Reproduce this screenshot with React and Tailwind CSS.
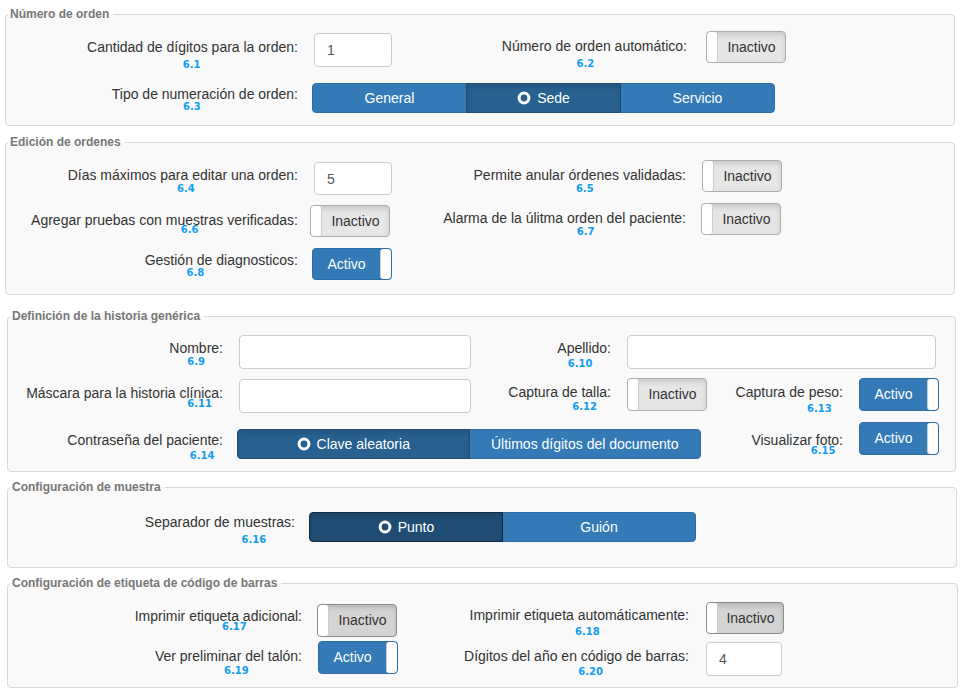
// App.jsx
import React from 'react';

const NUM = "font-['DejaVu_Sans',sans-serif] font-bold text-[10px] leading-[12px] text-[#139cf0] whitespace-nowrap";

function Section({ title, outer, children }) {
  return (
    <fieldset className={`min-w-0 rounded-[4px] border border-[#d9d9d9] bg-[#f9f9f9] px-0 ${outer}`}>
      <legend className="ml-[2px] pl-[2px] pr-[4px] text-[12px] leading-[14px] font-bold text-[#777]">
        {title}
      </legend>
      {children}
    </fieldset>
  );
}

function Label({ text, num, col, numCls }) {
  return (
    <div className={`shrink-0 flex justify-end ${col}`}>
      <div className="flex flex-col items-center">
        <span className="text-[14px] leading-[20px] text-[#333] whitespace-nowrap">{text}</span>
        <span className={`${NUM} ${numCls}`}>{num}</span>
      </div>
    </div>
  );
}

function Input({ value, cls }) {
  return (
    <input
      readOnly
      value={value}
      className={`shrink-0 rounded-[4px] border border-[#ccc] bg-white pl-[12px] text-[14px] text-[#555] outline-none ${cls}`}
    />
  );
}

function Toggle({ on, dark, cls }) {
  if (on) {
    return (
      <div className={`shrink-0 flex overflow-hidden rounded-[4px] border border-[#2e6da4] bg-[#337ab7] ${cls}`}>
        <span className="flex-1 flex items-center justify-center text-[14px] text-white">Activo</span>
        <span className="w-[11px] rounded-[3px] border-l border-[#ccc] bg-white" />
      </div>
    );
  }
  return (
    <div
      className={`shrink-0 flex overflow-hidden rounded-[4px] border shadow-[inset_0_3px_5px_rgba(0,0,0,0.125)] ${
        dark ? 'border-[#8c8c8c] bg-[#d4d4d4]' : 'border-[#adadad] bg-[#e6e6e6]'
      } ${cls}`}
    >
      <span className="w-[11px] rounded-[3px] border-r border-[#ccc] bg-white" />
      <span className="flex-1 flex items-center justify-center text-[14px] text-[#333]">Inactivo</span>
    </div>
  );
}

function RadioDot() {
  return (
    <svg width="14" height="14" viewBox="0 0 14 14" className="shrink-0">
      <circle cx="7" cy="7" r="4.9" fill="none" stroke="white" strokeWidth="3" />
    </svg>
  );
}

function Segmented({ options, active, dark, cls }) {
  return (
    <div className={`shrink-0 flex ${cls}`}>
      {options.map((opt, i) => {
        const isActive = i === active;
        const first = i === 0;
        const last = i === options.length - 1;
        return (
          <div
            key={opt}
            className={`flex-1 flex items-center justify-center gap-[6px] border text-[14px] text-white ${
              isActive
                ? dark
                  ? 'z-10 border-[#122b40] bg-[#204d74] shadow-[inset_0_3px_5px_rgba(0,0,0,0.125)]'
                  : 'z-10 border-[#204d74] bg-[#286090] shadow-[inset_0_3px_5px_rgba(0,0,0,0.125)]'
                : 'border-[#2e6da4] bg-[#337ab7]'
            } ${first ? 'rounded-l-[4px]' : '-ml-px'} ${last ? 'rounded-r-[4px]' : ''}`}
          >
            {isActive && <RadioDot />}
            <span>{opt}</span>
          </div>
        );
      })}
    </div>
  );
}

export default function App() {
  return (
    <div className="min-h-screen bg-white pt-[7px] font-['Liberation_Sans',Arial,sans-serif] text-[#333]">
      {/* Número de orden */}
      <Section title="Número de orden" outer="ml-[5px] mb-[9px] w-[950px]">
        <div className="flex h-[54px]">
          <Label col="w-[292px] pt-[16px]" text="Cantidad de dígitos para la orden:" num="6.1" numCls="mt-[2px] -translate-x-[1px]" />
          <Input value="1" cls="ml-[16px] mt-[12px] w-[78px] h-[34px]" />
          <Label col="w-[295px] pt-[15px]" text="Número de orden automático:" num="6.2" numCls="mt-[2px] -translate-x-[9px]" />
          <Toggle cls="ml-[19px] mt-[10px] w-[80px] h-[32px]" />
        </div>
        <div className="flex h-[50px]">
          <Label col="w-[292px] pt-[9px]" text="Tipo de numeración de orden:" num="6.3" numCls="-mt-[3px] -translate-x-[13px]" />
          <Segmented cls="ml-[14px] mt-[8px] w-[463px] h-[30px]" options={['General', 'Sede', 'Servicio']} active={1} />
        </div>
      </Section>

      {/* Edición de ordenes */}
      <Section title="Edición de ordenes" outer="ml-[5px] mb-[14px] w-[950px]">
        <div className="flex h-[51px]">
          <Label col="w-[292px] pt-[16px]" text="Días máximos para editar una orden:" num="6.4" numCls="-mt-[2px] translate-x-[3px]" />
          <Input value="5" cls="ml-[16px] mt-[13px] w-[78px] h-[33px]" />
          <Label col="w-[294px] pt-[16px]" text="Permite anular órdenes validadas:" num="6.5" numCls="-mt-[2px] translate-x-[5px]" />
          <Toggle cls="ml-[16px] mt-[11px] w-[80px] h-[32px]" />
        </div>
        <div className="flex h-[44px]">
          <Label col="w-[292px] pt-[10px]" text="Agregar pruebas con muestras verificadas:" num="6.6" numCls="-mt-[6px] translate-x-[25px]" />
          <Toggle cls="ml-[12px] mt-[5px] w-[80px] h-[32px]" />
          <Label col="w-[296px] pt-[8px]" text="Alarma de la úlitma orden del paciente:" num="6.7" numCls="-mt-[2px] translate-x-[21px]" />
          <Toggle cls="ml-[15px] mt-[3px] w-[80px] h-[32px]" />
        </div>
        <div className="flex h-[50px]">
          <Label col="w-[292px] pt-[6px]" text="Gestión de diagnosticos:" num="6.8" numCls="-mt-[3px] -translate-x-[26px]" />
          <Toggle on cls="ml-[14px] mt-[4px] w-[80px] h-[32px]" />
        </div>
      </Section>

      {/* Definición de la historia genérica */}
      <Section title="Definición de la historia genérica" outer="ml-[7px] mb-[8px] w-[949px]">
        <div className="flex h-[53px]">
          <Label col="w-[215px] pt-[15px]" text="Nombre:" num="6.9" numCls="-mt-[2px]" />
          <Input value="" cls="ml-[16px] mt-[12px] w-[232px] h-[34px]" />
          <Label col="w-[140px] pt-[15px]" text="Apellido:" num="6.10" numCls="mt-0 -translate-x-[4px]" />
          <Input value="" cls="ml-[16px] mt-[12px] w-[309px] h-[34px]" />
        </div>
        <div className="flex h-[44px]">
          <Label col="w-[215px] pt-[7px]" text="Máscara para la historia clínica:" num="6.11" numCls="-mt-[5px] translate-x-[75px]" />
          <Input value="" cls="ml-[16px] mt-[3px] w-[232px] h-[34px]" />
          <Label col="w-[140px] pt-[6px]" text="Captura de talla:" num="6.12" numCls="-mt-[1px] translate-x-[25px]" />
          <Toggle cls="ml-[16px] mt-[2px] w-[80px] h-[33px]" />
          <Label col="w-[136px] pt-[6px]" text="Captura de peso:" num="6.13" numCls="mt-[1px] translate-x-[30px]" />
          <Toggle on cls="ml-[16px] mt-[2px] w-[80px] h-[33px]" />
        </div>
        <div className="flex h-[51px]">
          <Label col="w-[215px] pt-[10px]" text="Contraseña del paciente:" num="6.14" numCls="mt-0 translate-x-[57px]" />
          <Segmented cls="ml-[14px] mt-[9px] w-[464px] h-[30px]" options={['Clave aleatoria', 'Últimos dígitos del documento']} active={0} />
          <Label col="w-[142px] pt-[10px]" text="Visualizar foto:" num="6.15" numCls="-mt-[5px] translate-x-[26px]" />
          <Toggle on cls="ml-[16px] mt-[2px] w-[80px] h-[33px]" />
        </div>
      </Section>

      {/* Configuración de muestra */}
      <Section title="Configuración de muestra" outer="ml-[7px] mb-[8px] w-[950px]">
        <div className="flex h-[73px]">
          <Label col="w-[287px] pt-[18px]" text="Separador de muestras:" num="6.16" numCls="mt-[2px] translate-x-[34px]" />
          <Segmented dark cls="ml-[14px] mt-[18px] w-[387px] h-[30px]" options={['Punto', 'Guión']} active={0} />
        </div>
      </Section>

      {/* Configuración de etiqueta de código de barras */}
      <Section title="Configuración de etiqueta de código de barras" outer="ml-[7px] w-[951px]">
        <div className="flex h-[50px]">
          <Label col="w-[294px] pt-[16px]" text="Imprimir etiqueta adicional:" num="6.17" numCls="-mt-[5px] translate-x-[16px]" />
          <Toggle dark cls="ml-[15px] mt-[14px] w-[80px] h-[33px]" />
          <Label col="w-[292px] pt-[15px]" text="Imprimir etiqueta automáticamente:" num="6.18" numCls="mt-[1px] translate-x-[8px]" />
          <Toggle dark cls="ml-[17px] mt-[12px] w-[78px] h-[32px]" />
        </div>
        <div className="flex h-[47px]">
          <Label col="w-[294px] pt-[6px]" text="Ver preliminar del talón:" num="6.19" numCls="-mt-[1px] translate-x-[8px]" />
          <Toggle on cls="ml-[16px] mt-[1px] w-[80px] h-[33px]" />
          <Label col="w-[291px] pt-[6px]" text="Dígitos del año en código de barras:" num="6.20" numCls="mt-0 translate-x-[14px]" />
          <Input value="4" cls="ml-[17px] mt-[2px] w-[76px] h-[34px]" />
        </div>
      </Section>
    </div>
  );
}
